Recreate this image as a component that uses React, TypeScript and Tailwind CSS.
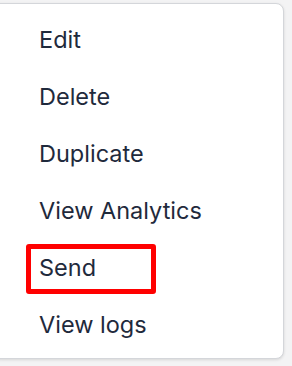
const items = ['Edit', 'Delete', 'Duplicate', 'View Analytics', 'Send', 'View logs'];

export default function App() {
  return (
    <div
      className="h-[366px] w-[292px] overflow-hidden bg-[#f3f3f4] pt-[3px]"
      style={{ fontFamily: 'Inter, "Noto Sans", sans-serif' }}
    >
      <div className="ml-[-8px] w-[292px] rounded-lg border border-[#d4d6da] bg-white pb-[5px] pt-[7px] shadow-[0_1px_3px_rgba(0,0,0,0.12)]">
        {items.map((label) => (
          <div key={label} className="relative flex h-[57px] items-center pl-[46px]">
            <span className="text-[23.5px] leading-none text-[#1f2a3c]">{label}</span>
            {label === 'Send' && (
              <div className="absolute left-[33px] top-[5px] h-[50px] w-[130px] rounded-[3px] border-[5px] border-[#ff0000]" />
            )}
          </div>
        ))}
      </div>
    </div>
  );
}
